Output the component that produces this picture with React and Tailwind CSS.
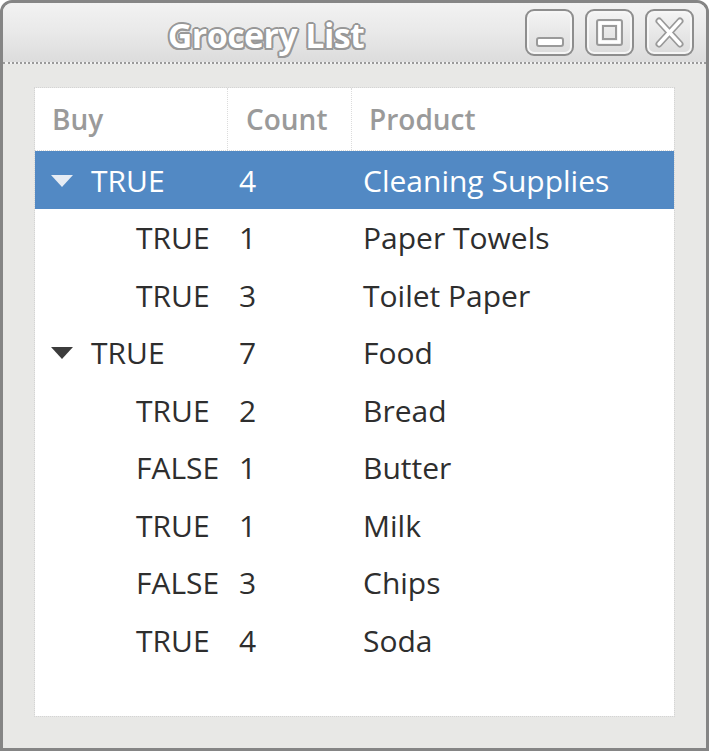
import React from 'react'

const FONT = { fontFamily: '"Open Sans", "Noto Sans", sans-serif' }

const rows = [
  { buy: 'TRUE', count: 4, product: 'Cleaning Supplies', parent: true, selected: true },
  { buy: 'TRUE', count: 1, product: 'Paper Towels' },
  { buy: 'TRUE', count: 3, product: 'Toilet Paper' },
  { buy: 'TRUE', count: 7, product: 'Food', parent: true },
  { buy: 'TRUE', count: 2, product: 'Bread' },
  { buy: 'FALSE', count: 1, product: 'Butter' },
  { buy: 'TRUE', count: 1, product: 'Milk' },
  { buy: 'FALSE', count: 3, product: 'Chips' },
  { buy: 'TRUE', count: 4, product: 'Soda' },
]

function TitleButton({ children }) {
  return (
    <div className="w-[49px] h-[47px] rounded-[9px] border-2 border-[#8e8e8e] bg-gradient-to-b from-[#f4f4f4] to-[#dcdcdc] flex items-center justify-center shadow-[inset_0_0_0_2px_#f6f6f6]">
      <svg width="45" height="43" viewBox="0 0 45 43">{children}</svg>
    </div>
  )
}

function Triangle({ light }) {
  return (
    <svg width="24" height="14" viewBox="0 0 24 14" className="shrink-0">
      <path d="M1 1 L23 1 L12 13 Z" fill={light ? '#e6ecf4' : '#3c3c3c'} />
    </svg>
  )
}

export default function App() {
  return (
    <div
      className="w-[709px] h-[751px] flex flex-col bg-[#e8e8e6] border-[3px] border-[#858585] rounded-t-[12px] overflow-hidden"
      style={FONT}
    >
      {/* Title bar */}
      <div className="h-[61px] shrink-0 flex items-center bg-gradient-to-b from-[#f2f2f2] via-[#e9e9e9] to-[#dcdcdc] border-b-2 border-dotted border-[#9a9a9a]">
        <div className="flex-1 flex justify-center pt-[4px]">
          <span
            className="text-[34px] font-bold text-white leading-none tracking-[-0.6px] pl-[4px]"
            style={{ textShadow: '0 0 1px #888, 1.5px 1.5px 0 #999, -1.5px -1.5px 0 #999, 1.5px -1.5px 0 #999, -1.5px 1.5px 0 #999, 0 2px 0 #999, 0 -2px 0 #999, 2px 0 0 #999, -2px 0 0 #999' }}
          >
            Grocery List
          </span>
        </div>
        <div className="flex gap-[11px] pr-[12px]">
          <TitleButton>
            <rect x="10" y="27" width="26" height="8" rx="2" fill="#fff" stroke="#9a9a9a" strokeWidth="2" />
          </TitleButton>
          <TitleButton>
            <rect x="10" y="9" width="25" height="25" rx="2" fill="none" stroke="#9a9a9a" strokeWidth="2" />
            <rect x="13" y="12" width="19" height="19" fill="none" stroke="#fff" strokeWidth="3" />
            <rect x="16" y="15" width="13" height="13" fill="none" stroke="#9a9a9a" strokeWidth="2" />
          </TitleButton>
          <TitleButton>
            <path d="M12 10 L33 33 M33 10 L12 33" stroke="#9a9a9a" strokeWidth="7" strokeLinecap="round" />
            <path d="M12 10 L33 33 M33 10 L12 33" stroke="#fff" strokeWidth="3.5" strokeLinecap="round" />
          </TitleButton>
        </div>
      </div>

      {/* Body */}
      <div className="flex-1 pt-[24px] px-[32px] pb-[32px]">
        <div className="h-full bg-white outline outline-1 outline-dotted outline-[#d4d4d4]">
          {/* Header */}
          <div className="h-[63px] flex text-[28px] font-semibold text-[#9a9a9a] border-b border-dotted border-[#d8d8d8]">
            <div className="w-[193px] pl-[17px] flex items-center border-r border-dotted border-[#dcdcdc]">Buy</div>
            <div className="w-[124px] pl-[18px] flex items-center border-r border-dotted border-[#dcdcdc]">Count</div>
            <div className="flex-1 pl-[17px] flex items-center">Product</div>
          </div>

          {/* Rows */}
          {rows.map((r, i) => (
            <div
              key={i}
              className={`h-[57.5px] flex items-center text-[30px] leading-none pt-[2px] ${
                r.selected ? 'bg-[#5289c4] text-white' : 'text-[#2e2e2e]'
              }`}
            >
              <div className={`w-[193px] flex items-center ${r.parent ? 'pl-[15px] gap-[17px]' : 'pl-[101px]'}`}>
                {r.parent && <Triangle light={r.selected} />}
                <span>{r.buy}</span>
              </div>
              <div className="w-[124px] pl-[11px]">{r.count}</div>
              <div className="flex-1 pl-[11px]">{r.product}</div>
            </div>
          ))}
        </div>
      </div>
    </div>
  )
}
